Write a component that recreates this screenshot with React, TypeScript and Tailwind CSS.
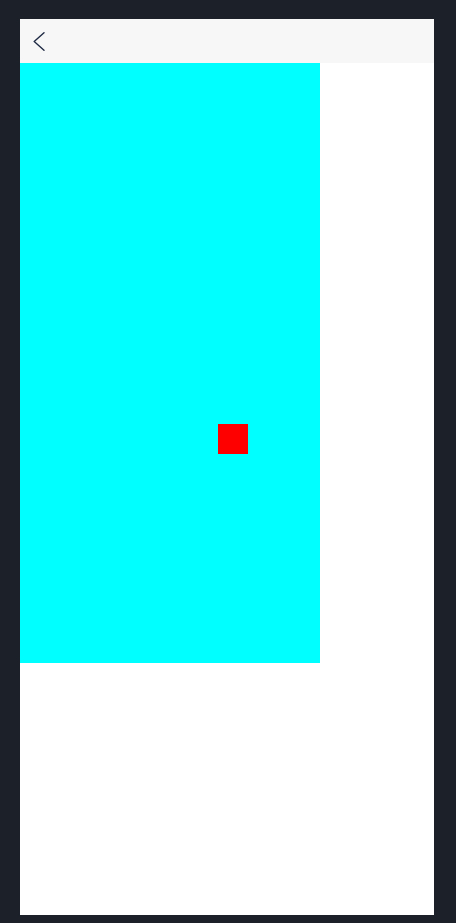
import React from "react";

export default function App() {
  return (
    <div className="w-[456px] h-[923px] bg-[#1b2029] pt-[19px] pl-[20px] overflow-hidden">
      <div className="w-[414px] h-[896px] bg-white flex flex-col">
        <div className="h-[44px] bg-[#f7f7f7] flex items-center pl-[13px] shrink-0">
          <svg width="12" height="19" viewBox="0 0 12 19" fill="none">
            <polyline
              points="11,0.8 1.2,9.5 11,18.2"
              stroke="#1f2a44"
              strokeWidth="1.4"
              strokeLinecap="round"
              strokeLinejoin="round"
            />
          </svg>
        </div>
        <div className="relative w-[300px] h-[600px] bg-[#00ffff]">
          <div className="absolute left-[198px] top-[361px] w-[30px] h-[30px] bg-[#ff0000]" />
        </div>
      </div>
    </div>
  );
}
